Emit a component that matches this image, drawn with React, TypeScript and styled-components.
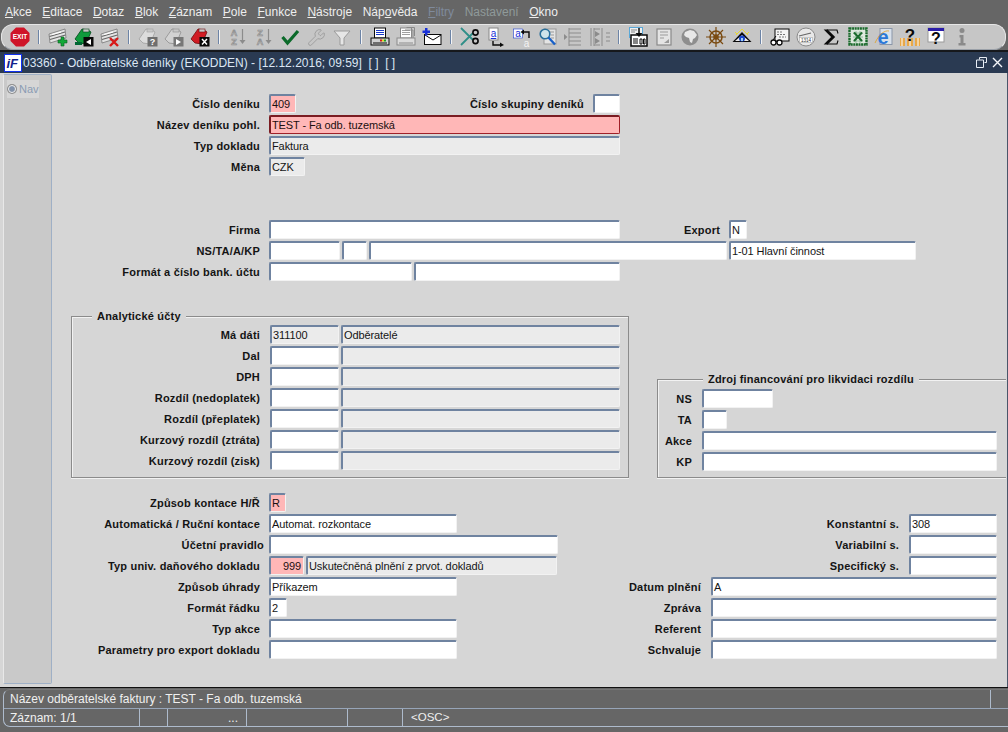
import React from 'react';
import styled, { createGlobalStyle } from 'styled-components';
import { Wrench } from 'lucide-react';

const GlobalStyle = createGlobalStyle`
  html, body { margin: 0; padding: 0; background: #666; }
  body { font-family: "Liberation Sans", Arial, sans-serif; font-size: 11px; }
`;

const Page = styled.div`
  width: 1008px;
  height: 732px;
  display: flex;
  flex-direction: column;
  overflow: hidden;
  background: #666;
`;

const MenuBar = styled.div`
  height: 24px;
  display: flex;
  align-items: center;
  padding-left: 5px;
  gap: 10.6px;
  flex: none;
`;

const MenuItem = styled.span<{ $state?: 'off' | 'dim' }>`
  font-size: 12px;
  color: ${({ $state }) => ($state === 'off' ? '#7f8a9c' : $state === 'dim' ? '#8f9a9a' : '#eeeeee')};
  u { text-underline-offset: 1px; }
`;

const Toolbar = styled.div`
  height: 26px;
  box-sizing: border-box;
  flex: none;
  display: flex;
  align-items: center;
  padding-left: 5px;
  margin: 0 2px 0 1px;
  background: #c6c6c6;
  border: 1px solid #e6e6e6;
  border-bottom-color: #9aa0a8;
  border-radius: 12px;
`;

const ToolCell = styled.div`
  width: 26px;
  height: 22px;
  display: flex;
  align-items: center;
  justify-content: center;
  flex: none;
`;

const ToolSep = styled.div`
  width: 12px;
  flex: none;
  display: flex;
  justify-content: center;
  &::before {
    content: '';
    width: 2px;
    height: 14px;
    background: linear-gradient(90deg, #6d84a6 50%, #f4f4f4 50%);
  }
`;

const TitleBar = styled.div`
  height: 23px;
  box-sizing: border-box;
  flex: none;
  border-top: 2px solid #16181c;
  display: flex;
  align-items: center;
  background: #2a3a52;
  color: #dbe6f4;
  font-size: 12px;
  padding: 0 4px;
  white-space: pre;
`;

const TitleText = styled.span`
  margin-left: 1px;
  flex: 1;
`;

const WindowButtons = styled.div`
  display: flex;
  align-items: center;
  gap: 5px;
  margin-right: 1px;
`;

const Body = styled.div`
  flex: 1;
  display: flex;
  background: #d6d6d6;
  border-right: 1px solid #4a566a;
  min-height: 0;
`;

const NavPanel = styled.div`
  width: 49px;
  margin: 1px 0 3px 3px;
  flex: none;
  box-sizing: border-box;
  background: #c9c9c9;
  border: 1px solid #9fb0c6;
  border-left-color: #e8e8e8;
  border-radius: 2px;
  padding: 5px 0 0 3px;
`;

const NavItem = styled.div`
  width: 32px;
  height: 18px;
  display: flex;
  align-items: center;
  gap: 3px;
  background: #d6d6d6;
  color: #8a9cb4;
  font-size: 11px;
`;

const NavDot = styled.span`
  width: 6px;
  height: 6px;
  margin-left: 1px;
  border-radius: 50%;
  background: #8292aa;
  border: 1px solid #f0f0f0;
  box-shadow: 0 0 0 1px #8e8e8e;
  flex: none;
`;

const Form = styled.div`
  flex: 1;
  display: flex;
  flex-direction: column;
  padding-top: 21px;
  min-width: 0;
`;

const Section = styled.div<{ $top?: number }>`
  margin-top: ${({ $top }) => $top ?? 0}px;
  display: flex;
  flex-direction: column;
`;

const Row = styled.div<{ $gap?: number }>`
  height: 21px;
  display: flex;
  align-items: flex-start;
  gap: ${({ $gap }) => $gap ?? 9}px;
`;

const FieldGroup = styled.div`
  display: flex;
  gap: 2px;
`;

const Label = styled.div<{ $w?: number; $nudge?: number }>`
  ${({ $w }) => ($w ? `width: ${$w}px;` : '')}
  height: 19px;
  line-height: 20px;
  flex: none;
  text-align: right;
  font-size: 11px;
  font-weight: bold;
  color: #141414;
  letter-spacing: 0.2px;
  white-space: nowrap;
  ${({ $nudge }) => ($nudge ? `transform: translateX(${$nudge}px);` : '')}
`;

const tones = {
  white: { bg: '#ffffff', text: '#141414', edge: '#6f83a0', low: '#f2f2f2' },
  grey: { bg: '#ebebeb', text: '#141414', edge: '#6f83a0', low: '#f2f2f2' },
  pink: { bg: '#ffb7b7', text: '#1c1010', edge: '#6f83a0', low: '#f2f2f2' },
  focus: { bg: '#ffb7b7', text: '#1c1010', edge: '#7a1c22', low: '#a02028' },
};

const Field = styled.div<{ $w: number; $tone?: keyof typeof tones; $right?: boolean }>`
  width: ${({ $w }) => $w}px;
  height: 19px;
  box-sizing: border-box;
  flex: none;
  padding: 1px 2px 0 1px;
  line-height: 15px;
  font-size: 11px;
  letter-spacing: -0.1px;
  white-space: nowrap;
  overflow: hidden;
  border-radius: 2px;
  text-align: ${({ $right }) => ($right ? 'right' : 'left')};
  background: ${({ $tone }) => tones[$tone ?? 'white'].bg};
  color: ${({ $tone }) => tones[$tone ?? 'white'].text};
  border-style: solid;
  border-width: 2px 1px 1px 2px;
  border-color: ${({ $tone }) => {
    const t = tones[$tone ?? 'white'];
    return `${t.edge} ${t.low} ${t.low} ${t.edge}`;
  }};
`;

const Groups = styled.div`
  margin-top: 33px;
  display: flex;
  align-items: flex-end;
  padding-left: 19px;
  gap: 28px;
`;

const GroupBox = styled.div<{ $w: number; $open?: boolean }>`
  position: relative;
  width: ${({ $w }) => $w}px;
  box-sizing: border-box;
  border: 1px solid #8b8b8b;
  ${({ $open }) => ($open ? 'border-right: none;' : '')}
  box-shadow: inset 1px 1px 0 #f2f2f2, 0 1px 0 #f2f2f2;
  display: flex;
  flex-direction: column;
`;

const Legend = styled.div<{ $left: number }>`
  position: absolute;
  top: -7px;
  left: ${({ $left }) => $left}px;
  padding: 0 5px;
  background: #d6d6d6;
  font-size: 11px;
  font-weight: bold;
  color: #141414;
  letter-spacing: 0.2px;
  line-height: 13px;
`;

const AnalyticBox = styled(GroupBox)`
  padding: 8px 0 5px;
`;

const FundBox = styled(GroupBox)`
  padding: 9px 0 4px;
`;

const Lower = styled.div`
  margin-top: 15px;
  display: flex;
  justify-content: space-between;
  padding-right: 10px;
`;

const RightColumn = styled.div`
  display: flex;
  flex-direction: column;
  align-items: flex-end;
  padding-top: 21px;
`;

const StatusBar = styled.div`
  height: 45px;
  flex: none;
  box-sizing: border-box;
  border-top: 1px solid #111;
  background: #666;
  padding: 1px 0 5px 3px;
  color: #f0f0f0;
  font-size: 12px;
`;

const StatusFrame = styled.div`
  height: 38px;
  box-sizing: border-box;
  border-left: 1px solid #aebbcc;
  border-bottom: 1px solid #aebbcc;
  border-top: 1px solid #777;
  border-radius: 7px 0 0 7px;
  display: flex;
  flex-direction: column;
`;

const StatusLine = styled.div`
  height: 18px;
  display: flex;
  align-items: center;
  border-bottom: 1px solid #97a5b8;
  padding-left: 6px;
`;

const StatusMessage = styled.div`
  width: 980px;
  height: 100%;
  line-height: 18px;
  border-right: 1px solid #aebbcc;
`;

const StatusCells = styled.div`
  flex: 1;
  display: flex;
  align-items: stretch;
`;

const StatusCell = styled.div<{ $w: number }>`
  width: ${({ $w }) => $w}px;
  box-sizing: border-box;
  flex: none;
  padding: 0 3px 0 6px;
  line-height: 18px;
  border-right: 1px solid #aebbcc;
`;

const StatusDots = styled(StatusCell)`
  text-align: right;
  padding-right: 8px;
`;

const StatusLast = styled.div`
  padding-left: 8px;
  line-height: 17px;
  font-size: 11.5px;
`;

/* toolbar pictures, all on a 20 x 20 grid */
const Ico = ({ children }: { children: React.ReactNode }) => (
  <svg width="20" height="20" viewBox="0 0 20 20" fontFamily="Liberation Sans, sans-serif">
    {children}
  </svg>
);

const Stripes = () => (
  <g strokeWidth="1.2">
    <polygon points="1,7 17,2 18,11 2,16" fill="#e4e4e4" stroke="#777" strokeWidth=".8" />
    <path d="M1.5 9.5 17 5M2 12.5 17.5 8" stroke="#666" fill="none" />
    <path d="M4 7.5 13 5" stroke="#fff" fill="none" />
  </g>
);

const Slab = ({ fill, edge }: { fill: string; edge: string }) => (
  <g>
    <polygon points="1,12 8,2 14,3 17,5 12,17 5,16" fill={fill} stroke={edge} strokeWidth=".8" />
    <rect x="9" y="2" width="6" height="3" fill="#c8c8c8" stroke={edge} strokeWidth=".6" />
  </g>
);

const Badge = ({ fill, children }: { fill: string; children: React.ReactNode }) => (
  <g>
    <rect x="9.5" y="10" width="10" height="9.5" fill={fill} />
    {children}
  </g>
);

const ExitIcon = () => (
  <Ico>
    <polygon points="6,.5 14,.5 19.5,6 19.5,14 14,19.5 6,19.5 .5,14 .5,6" fill="#cf1428" />
    <text x="10" y="12.4" fontSize="6.6" fontWeight="bold" fill="#fff" textAnchor="middle">EXIT</text>
  </Ico>
);
const NewIcon = () => (
  <Ico>
    <Stripes />
    <path d="M13 10h3v3h3v3h-3v3h-3v-3h-3v-3h3z" fill="#12a838" stroke="#0a5a20" strokeWidth=".6" />
  </Ico>
);
const SaveIcon = () => (
  <Ico>
    <Slab fill="#0f9a3c" edge="#04481c" />
    <path d="M1 15h7v3H1z" fill="#063" />
    <Badge fill="#080808"><path d="M17 12v6l-5-3z" fill="#fff" /></Badge>
  </Ico>
);
const DropIcon = () => (
  <Ico>
    <Stripes />
    <path d="M10 11l8 8M18 11l-8 8" stroke="#d81818" strokeWidth="2.4" />
  </Ico>
);
const QueryIcon = () => (
  <Ico>
    <Slab fill="#dcdcdc" edge="#a0a0a0" />
    <Badge fill="#6e6e6e">
      <text x="14.5" y="18" fontSize="9" fontWeight="bold" fill="#fff" textAnchor="middle">?</text>
    </Badge>
  </Ico>
);
const RunIcon = () => (
  <Ico>
    <Slab fill="#d2d2d2" edge="#8e8e8e" />
    <Badge fill="#777"><path d="M12 12v6l5-3z" fill="#fff" /></Badge>
  </Ico>
);
const CancelIcon = () => (
  <Ico>
    <Slab fill="#d01c24" edge="#6e0c10" />
    <Badge fill="#080808"><path d="M12 12l5 5.5M17 12l-5 5.5" stroke="#fff" strokeWidth="1.5" /></Badge>
  </Ico>
);
const SortIcon = ({ top, low }: { top: string; low: string }) => (
  <Ico>
    <g fontSize="9" fontWeight="bold" fill="none" stroke="#8e8e8e" strokeWidth=".7" textAnchor="middle">
      <text x="6" y="9">{top}</text>
      <text x="6" y="18">{low}</text>
    </g>
    <path d="M14.5 2v12" stroke="#8c8c8c" strokeWidth="1.2" />
    <path d="M11.5 13h6l-3 4z" fill="#8c8c8c" />
  </Ico>
);
const CheckIcon = () => (
  <Ico>
    <path d="M2.5 10l5 6L18 4" fill="none" stroke="#0b6a2a" strokeWidth="3.2" />
  </Ico>
);
const FilterIcon = () => (
  <Ico>
    <polygon points="2,4 18,4 12,11 12,18 8,18 8,11" fill="#e6e6e6" stroke="#9a9a9a" />
  </Ico>
);
const PrintIcon = ({ dim }: { dim?: boolean }) => {
  const ink = dim ? '#8a8a8a' : '#0a0a0a';
  return (
    <Ico>
      <rect x="4.5" y="1" width="11" height="10" fill="#fff" stroke={ink} />
      <path d="M6 3.5h8M6 5.5h8M6 7.5h8" stroke={dim ? '#a0a0a0' : '#1838c8'} />
      <rect x="1" y="11" width="18" height="7" fill={dim ? '#dcdcdc' : '#d0d0d0'} stroke={ink} />
      <path d="M3 16h14" stroke={ink} />
      {!dim && <path d="M10 13.5h2" stroke="#d01818" strokeWidth="2" />}
      {!dim && <path d="M12 13.5h2" stroke="#e0d020" strokeWidth="2" />}
      {!dim && <path d="M14 13.5h2" stroke="#18a028" strokeWidth="2" />}
      {dim && <path d="M17 11V3h-8M18.500 9V.5h-8" stroke={ink} fill="none" />}
    </Ico>
  );
};
const MailIcon = () => (
  <Ico>
    <rect x="2.5" y="7.5" width="16.5" height="10" fill="#fff" stroke="#0a0a0a" />
    <path d="M3 8l8 5 8-5" fill="none" stroke="#0a0a0a" />
    <path d="M3 1h2.5v2.5H8V6H5.500v2.500H3V6H.5V3.500H3z" fill="#1830d8" />
  </Ico>
);
const CutIcon = () => (
  <Ico>
    <path d="M1 1l12 12M1 18L13 6" stroke="#2f8f88" strokeWidth="1.8" fill="none" />
    <circle cx="15.500" cy="5.500" r="2.600" fill="none" stroke="#0a0a0a" strokeWidth="1.600" />
    <circle cx="15.500" cy="14" r="2.600" fill="none" stroke="#0a0a0a" strokeWidth="1.600" />
  </Ico>
);
const CopyIcon = () => (
  <Ico>
    <rect x="3" y="1" width="9" height="12" fill="#fff" stroke="#888" />
    <text x="7.500" y="10" fontSize="10" fill="#1830d8" textAnchor="middle" textDecoration="underline">a</text>
    <path d="M7 14v4h8" fill="none" stroke="#0a0a0a" strokeWidth="1.400" />
    <path d="M14 15.500l4 2.500-4 2z" fill="#0a0a0a" />
  </Ico>
);
const PasteIcon = () => (
  <Ico>
    <rect x="1.500" y="2" width="9" height="9" fill="#fff" stroke="#2040d0" strokeWidth=".6" />
    <text x="6" y="9.500" fontSize="10" fill="#1830d8" textAnchor="middle">a</text>
    <path d="M17 11V5h-6" fill="none" stroke="#0a0a0a" strokeWidth="1.400" />
    <path d="M12 2.500L8.500 5l3.500 2.500z" fill="#0a0a0a" />
    <text x="14.500" y="19.500" fontSize="10" fill="#f4f4f4" textAnchor="middle">a</text>
  </Ico>
);
const FindIcon = () => (
  <Ico>
    <rect x="6" y="2" width="12" height="15" fill="#e4e4e4" stroke="#999" />
    <path d="M9 5h7M13 8h3M13 11h3" stroke="#999" />
    <circle cx="7" cy="7" r="4.800" fill="#cfe4ea" stroke="#2a6f9a" strokeWidth="1.600" />
    <path d="M10.500 10.500l6.500 7" stroke="#1860c8" strokeWidth="2.400" />
  </Ico>
);
const IndentIcon = () => (
  <Ico>
    <path d="M5 1v18M5 2h12M5 6h12M5 10h12M5 14h12M5 18h12" stroke="#8c8c8c" fill="none" />
    <path d="M0 7l3.500 3L0 13z" fill="#8c8c8c" />
  </Ico>
);
const TreeIcon = () => (
  <Ico>
    <path d="M1 1v18M4 1v18M4 2h6M4 18h6M12 1v18M16 10h4M16 6h4M16 14h4" stroke="#8c8c8c" fill="none" />
    <path d="M5 4l5 3-5 3zM5 11l5 3-5 3z" fill="#8c8c8c" />
  </Ico>
);
const LoadIcon = () => (
  <Ico>
    <rect x="1.500" y=".5" width="13" height="10" fill="#f0f0f0" stroke="#5aa8d8" />
    <path d="M3 3h6M3 5h4" stroke="#888" />
    <rect x="3" y="8" width="16" height="11" fill="#fff" stroke="#0a0a0a" strokeWidth="1.500" />
    <path d="M11 1v7" stroke="#0a0a0a" strokeWidth="1.500" />
    <path d="M7.500 6h7L11 10z" fill="#0a0a0a" />
    <path d="M5 12h5M5 14h5M5 16h5M12 12h2v5h-2zM15.500 12h1.500v5h-1.500z" stroke="#0a0a0a" fill="none" />
  </Ico>
);
const SheetIcon = () => (
  <Ico>
    <rect x="3" y="2" width="14" height="16" fill="#e4e4e4" stroke="#8a8a8a" strokeWidth="1.200" />
    <path d="M6 5h8M6 8h8M6 11h4" stroke="#9a9a9a" />
    <path d="M10 16l5-4v4z" fill="#9a9a9a" />
  </Ico>
);
const GlobeIcon = () => (
  <Ico>
    <circle cx="10" cy="10" r="8.500" fill="#8e8e8e" />
    <path d="M5 5l5-2 4 1 3 4-2 3-2 1-1 4-2-1-1-4-3-1-2-2z" fill="#e8e8e8" />
  </Ico>
);
const WheelIcon = () => (
  <Ico>
    <g stroke="#7a4a10" fill="none" strokeWidth="1.500">
      <circle cx="10" cy="10" r="6" />
      <circle cx="10" cy="10" r="2" />
      <path d="M10 0v20M0 10h20M3 3l14 14M17 3L3 17" strokeWidth="1.200" />
    </g>
  </Ico>
);
const EyeIcon = () => (
  <Ico>
    <path d="M10 2L4 8M10 2l6 6M3 5l2 2M17 5l-2 2" stroke="#e8d830" fill="none" />
    <polygon points="10,5 19.500,15 .5,15" fill="#0a0a0a" />
    <path d="M3 14l7-6 7 6z" fill="#eaeaea" />
    <circle cx="10" cy="11.500" r="3" fill="#1844c8" />
    <rect x="9" y="11" width="2" height="3" fill="#9fd0f0" />
  </Ico>
);
const ReviewIcon = () => (
  <Ico>
    <rect x="5" y="2" width="14" height="12" fill="#f4f4f4" stroke="#0a0a0a" />
    <path d="M7 5h5M7 7.500h9M9 10h7" stroke="#777" strokeDasharray="2 1" />
    <circle cx="3.500" cy="15.500" r="2.500" fill="#fff" stroke="#0a0a0a" strokeWidth="1.300" />
    <circle cx="9.500" cy="15.500" r="2.500" fill="#fff" stroke="#0a0a0a" strokeWidth="1.300" />
    <path d="M6 15h1M3 13l3-4" stroke="#0a0a0a" />
  </Ico>
);
const GaugeIcon = () => (
  <Ico>
    <circle cx="10" cy="10" r="9" fill="#e8e8e8" stroke="#8a8a8a" />
    <path d="M3 9l12-3" stroke="#666" strokeWidth="1.200" />
    <rect x="3.500" y="10.500" width="13" height="5" fill="#fff" stroke="#999" strokeWidth=".5" />
    <text x="10" y="15" fontSize="4.600" fill="#333" textAnchor="middle">1314</text>
  </Ico>
);
const SigmaIcon = () => (
  <Ico>
    <path d="M16 6.500L15 3H3l7 7-7 7h12l1-3.500" fill="none" stroke="#0a0a0a" strokeWidth="1.100" />
    <path d="M4.500 3l7 7-7 7" fill="none" stroke="#0a0a0a" strokeWidth="2.400" />
  </Ico>
);
const ExcelIcon = () => (
  <Ico>
    <rect x="1.500" y="1.500" width="17" height="16" fill="#dfe9df" stroke="#1a6b2c" strokeWidth="2.400" strokeDasharray="2 .6" />
    <path d="M5 6h10M5 10h10M5 14h10M8 4v12M12 4v12" stroke="#7fb08c" strokeWidth=".8" />
    <path d="M6 5.500l8 8.500M14 5.500l-8 8.500" stroke="#1a6b2c" strokeWidth="2" />
  </Ico>
);
const WebIcon = () => (
  <Ico>
    <rect x="6" y="1.500" width="12" height="16" fill="#d8e0ea" stroke="#8a96a8" />
    <text x="9" y="17" fontSize="20" fontWeight="bold" fill="#2a78d8" textAnchor="middle">e</text>
    <path d="M1 16C5 7 11 3 15 4" fill="none" stroke="#e0a020" strokeWidth=".8" />
  </Ico>
);
const HelpBooksIcon = () => (
  <Ico>
    <path d="M0 11h5v8H0zM7 11h6v8H7zM15 11h5v8h-5z" fill="#e8a848" />
    <path d="M2 11v8M10 11v8M18 11v8" stroke="#fff" />
    <text x="10" y="14" fontSize="17" fontWeight="bold" fill="#0a0a0a" textAnchor="middle">?</text>
  </Ico>
);
const HelpIcon = () => (
  <Ico>
    <rect x="2" y="1" width="16" height="14" fill="#fff" stroke="#9a9a9a" />
    <rect x="2" y="1" width="16" height="3" fill="#2a1ca8" />
    <text x="10" y="17" fontSize="16" fontWeight="bold" fill="#0a0a0a" textAnchor="middle">?</text>
  </Ico>
);
const InfoIcon = () => (
  <Ico>
    <circle cx="10" cy="3.500" r="2.500" fill="#8a8a8a" />
    <path d="M7.500 8h4v8h2v2.500h-7V16h2v-5.500h-1z" fill="#8a8a8a" />
  </Ico>
);
const FormLogo = () => (
  <svg width="18" height="18" viewBox="0 0 18 18" fontFamily="Liberation Sans, sans-serif">
    <rect x=".5" y=".5" width="17" height="17" fill="#ffffff" stroke="#1030f0" />
    <text x="2.500" y="13.500" fontSize="13" fontWeight="bold" fontStyle="italic" fill="#10208c">iF</text>
  </svg>
);

const toolGroups: React.ReactNode[][] = [
  [<ExitIcon />],
  [<NewIcon />, <SaveIcon />, <DropIcon />],
  [<QueryIcon />, <RunIcon />, <CancelIcon />],
  [
    <SortIcon top="A" low="Z" />,
    <SortIcon top="Z" low="A" />,
    <CheckIcon />,
    <Wrench size={19} strokeWidth={1} color="#949494" />,
    <FilterIcon />,
  ],
  [<PrintIcon />, <PrintIcon dim />, <MailIcon />],
  [<CutIcon />, <CopyIcon />, <PasteIcon />, <FindIcon />, <IndentIcon />, <TreeIcon />],
  [<LoadIcon />, <SheetIcon />, <GlobeIcon />, <WheelIcon />, <EyeIcon />],
  [<ReviewIcon />, <GaugeIcon />, <SigmaIcon />, <ExcelIcon />, <WebIcon />, <HelpBooksIcon />, <HelpIcon />, <InfoIcon />],
];

const analytic = [
  { label: 'Má dáti', code: '311100', name: 'Odběratelé', tone: 'grey' as const },
  { label: 'Dal' },
  { label: 'DPH' },
  { label: 'Rozdíl (nedoplatek)' },
  { label: 'Rozdíl (přeplatek)' },
  { label: 'Kurzový rozdíl (ztráta)' },
  { label: 'Kurzový rozdíl (zisk)' },
];

const fund = [
  { label: 'NS', w: 71 },
  { label: 'TA', w: 25 },
  { label: 'Akce', w: 295 },
  { label: 'KP', w: 295 },
];

const rightRows = [
  { label: 'Konstantní s.', w: 88, value: '308' },
  { label: 'Variabilní s.', w: 88 },
  { label: 'Specifický s.', w: 88 },
  { label: 'Datum plnění', w: 286, value: 'A' },
  { label: 'Zpráva', w: 286 },
  { label: 'Referent', w: 286 },
  { label: 'Schvaluje', w: 286 },
];

const App: React.FC = () => {
  return (
    <Page>
      <GlobalStyle />
      <MenuBar>
        <MenuItem><u>A</u>kce</MenuItem>
        <MenuItem><u>E</u>ditace</MenuItem>
        <MenuItem><u>D</u>otaz</MenuItem>
        <MenuItem><u>B</u>lok</MenuItem>
        <MenuItem><u>Z</u>áznam</MenuItem>
        <MenuItem><u>P</u>ole</MenuItem>
        <MenuItem><u>F</u>unkce</MenuItem>
        <MenuItem><u>N</u>ástroje</MenuItem>
        <MenuItem>Náp<u>o</u>věda</MenuItem>
        <MenuItem $state="off"><u>F</u>iltry</MenuItem>
        <MenuItem $state="dim">Nastavení</MenuItem>
        <MenuItem><u>O</u>kno</MenuItem>
      </MenuBar>

      <Toolbar>
        {toolGroups.map((group, g) => (
          <React.Fragment key={g}>
            {g > 0 && <ToolSep />}
            {group.map((icon, i) => (
              <ToolCell key={i}>{icon}</ToolCell>
            ))}
          </React.Fragment>
        ))}
      </Toolbar>

      <TitleBar>
        <FormLogo />
        <TitleText>03360 - Odběratelské deníky (EKODDEN) - [12.12.2016; 09:59]  [ ]  [ ]</TitleText>
        <WindowButtons>
          <svg width="11" height="11" viewBox="0 0 11 11">
            <path d="M3.500 2.500V.5h7v5H8.500M.5 3h7v7.500h-7z" fill="none" stroke="#e8eef6" />
          </svg>
          <svg width="11" height="11" viewBox="0 0 11 11">
            <path d="M1 1l9 9M10 1l-9 9" stroke="#f4f6fa" strokeWidth="1.400" />
          </svg>
        </WindowButtons>
      </TitleBar>

      <Body>
        <NavPanel>
          <NavItem>
            <NavDot />
            Nav
          </NavItem>
        </NavPanel>

        <Form>
          <Section>
            <Row>
              <Label $w={208}>Číslo deníku</Label>
              <Field $w={27} $tone="pink">409</Field>
              <Label $w={279}>Číslo skupiny deníků</Label>
              <Field $w={27} />
            </Row>
            <Row>
              <Label $w={208}>Název deníku pohl.</Label>
              <Field $w={351} $tone="focus">TEST - Fa odb. tuzemská</Field>
            </Row>
            <Row>
              <Label $w={208}>Typ dokladu</Label>
              <Field $w={351} $tone="grey">Faktura</Field>
            </Row>
            <Row>
              <Label $w={208}>Měna</Label>
              <Field $w={36} $tone="grey">CZK</Field>
            </Row>
          </Section>

          <Section $top={42}>
            <Row>
              <Label $w={208}>Firma</Label>
              <Field $w={351} />
              <Label $w={91}>Export</Label>
              <Field $w={18}>N</Field>
            </Row>
            <Row>
              <Label $w={208}>NS/TA/A/KP</Label>
              <FieldGroup>
                <Field $w={71} />
                <Field $w={25} />
                <Field $w={358} />
                <Field $w={187}>1-01 Hlavní činnost</Field>
              </FieldGroup>
            </Row>
            <Row>
              <Label $w={208}>Formát a číslo bank. účtu</Label>
              <FieldGroup>
                <Field $w={143} />
                <Field $w={206} />
              </FieldGroup>
            </Row>
          </Section>

          <Groups>
            <AnalyticBox $w={558}>
              <Legend $left={20}>Analytické účty</Legend>
              {analytic.map((row) => (
                <Row key={row.label} $gap={10}>
                  <Label $w={188}>{row.label}</Label>
                  <FieldGroup>
                    <Field $w={69} $tone={row.tone ?? 'white'}>{row.code}</Field>
                    <Field $w={279} $tone="grey">{row.name}</Field>
                  </FieldGroup>
                </Row>
              ))}
            </AnalyticBox>

            <FundBox $w={349} $open>
              <Legend $left={45}>Zdroj financování pro likvidaci rozdílu</Legend>
              {fund.map((row) => (
                <Row key={row.label} $gap={10}>
                  <Label $w={34}>{row.label}</Label>
                  <Field $w={row.w} />
                </Row>
              ))}
            </FundBox>
          </Groups>

          <Lower>
            <Section>
              <Row>
                <Label $w={208}>Způsob kontace H/Ř</Label>
                <Field $w={17} $tone="pink">R</Field>
              </Row>
              <Row>
                <Label $w={208}>Automatická / Ruční kontace</Label>
                <Field $w={188}>Automat. rozkontace</Field>
              </Row>
              <Row>
                <Label $w={208} $nudge={4}>Účetní pravidlo</Label>
                <Field $w={289} />
              </Row>
              <Row>
                <Label $w={208}>Typ univ. daňového dokladu</Label>
                <FieldGroup>
                  <Field $w={35} $tone="pink" $right>999</Field>
                  <Field $w={251} $tone="grey">Uskutečněná plnění z prvot. dokladů</Field>
                </FieldGroup>
              </Row>
              <Row>
                <Label $w={208}>Způsob úhrady</Label>
                <Field $w={188}>Příkazem</Field>
              </Row>
              <Row>
                <Label $w={208}>Formát řádku</Label>
                <Field $w={18}>2</Field>
              </Row>
              <Row>
                <Label $w={208}>Typ akce</Label>
                <Field $w={188} />
              </Row>
              <Row>
                <Label $w={208}>Parametry pro export dokladu</Label>
                <Field $w={188} />
              </Row>
            </Section>

            <RightColumn>
              {rightRows.map((row) => (
                <Row key={row.label} $gap={10}>
                  <Label>{row.label}</Label>
                  <Field $w={row.w}>{row.value}</Field>
                </Row>
              ))}
            </RightColumn>
          </Lower>
        </Form>
      </Body>

      <StatusBar>
        <StatusFrame>
          <StatusLine>
            <StatusMessage>Název odběratelské faktury : TEST - Fa odb. tuzemská</StatusMessage>
          </StatusLine>
          <StatusCells>
            <StatusCell $w={136}>Záznam: 1/1</StatusCell>
            <StatusCell $w={28} />
            <StatusDots $w={79}>...</StatusDots>
            <StatusCell $w={101} />
            <StatusCell $w={55} />
            <StatusLast>&lt;OSC&gt;</StatusLast>
          </StatusCells>
        </StatusFrame>
      </StatusBar>
    </Page>
  );
};

export default App;
